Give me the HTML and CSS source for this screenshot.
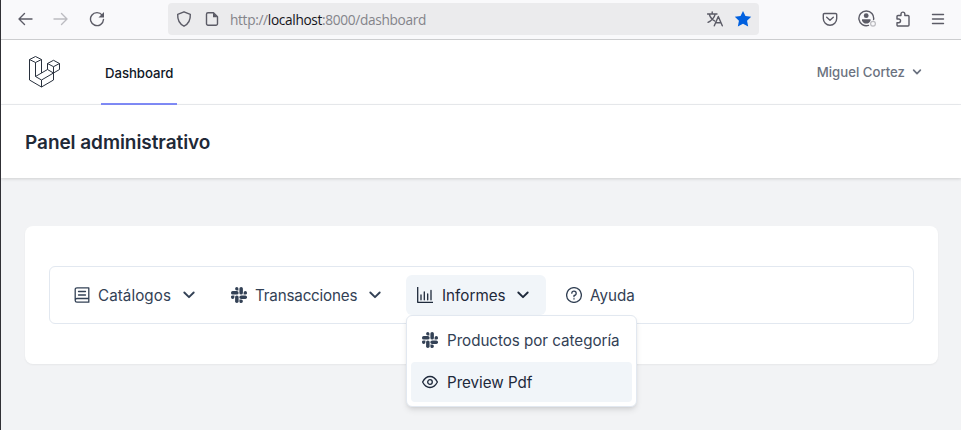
FILE: index.html
```html
<!DOCTYPE html>
<html lang="es">
<head>
<meta charset="utf-8">
<title>Panel administrativo</title>
<link rel="stylesheet" href="styles.css">
</head>
<body>
<svg class="defs" width="0" height="0">
  <symbol id="slack" viewBox="0 0 16 16"><g fill="currentColor">
    <path d="M5.800 0a1.600 1.600 0 0 1 1.600 1.600v1.800H5.800A1.700 1.700 0 0 1 5.800 0z"/><rect x="0" y="4.100" width="7.600" height="3.500" rx="1.700"/>
    <path d="M16 5.800a1.600 1.600 0 0 1-1.600 1.800h-1.800V5.800a1.700 1.700 0 0 1 3.400 0z"/><rect x="8.400" y="0" width="3.500" height="7.600" rx="1.700"/>
    <path d="M10.200 16a1.600 1.600 0 0 1-1.800-1.600v-1.800h1.800a1.700 1.700 0 0 1 0 3.400z"/><rect x="8.400" y="8.400" width="7.600" height="3.500" rx="1.700"/>
    <path d="M0 10.200a1.600 1.600 0 0 1 1.600-1.800h1.800v1.800a1.700 1.700 0 0 1-3.400 0z"/><rect x="4.100" y="8.400" width="3.500" height="7.600" rx="1.700"/></g></symbol>
  <symbol id="down" viewBox="0 0 14 14"><path d="M2.300 4.500 7 9.200 11.700 4.500" fill="none" stroke="currentColor" stroke-linecap="round" stroke-linejoin="round"/></symbol>
</svg>
<div class="window">
  <div class="toolbar">
    <svg class="tool back" viewBox="0 0 16 16"><path d="M15 8H2M7.500 2.500 2 8l5.500 5.500"/></svg>
    <svg class="tool forward" viewBox="0 0 16 16"><path d="M1 8h13M8.500 2.500 14 8l-5.500 5.500"/></svg>
    <svg class="tool reload" viewBox="0 0 16 16"><path d="M13.200 4.200A6.500 6.500 0 1 0 14.500 8.500"/><path class="solid" d="M15 1v5.500H9.500z"/></svg>
    <div class="address">
      <svg class="tool shield" viewBox="0 0 16 16"><path d="M8 .8 14.300 3.300C14.600 8.500 12.800 12.800 8 15.200 3.200 12.800 1.400 8.500 1.700 3.300z"/></svg>
      <svg class="tool page" viewBox="0 0 16 16"><path d="M9.500 1.700H4A1.500 1.500 0 0 0 2.500 3.200v9.600A1.500 1.500 0 0 0 4 14.300h8a1.500 1.500 0 0 0 1.500-1.500V5.700z"/><path class="solid" d="M9 1.500V6.200h4.700z"/></svg>
      <span class="url">http://<b>localhost</b>:8000/dashboard</span>
      <svg class="tool translate" viewBox="0 0 16 16"><path d="M.5 3h9.500M5.200 1v2M2.200 3c1 3.500 3.300 5.800 5.500 7M8.200 3C7.500 6.500 4 10 1 11.300M7.300 14.800 11.300 5.500l4 9.300M8.700 11.700h5.300"/></svg>
      <svg class="star" viewBox="0 0 16 16"><path d="M8 .8 10.200 5.400 15.300 6 11.600 9.600 12.600 14.700 8 12.200 3.400 14.700 4.400 9.600 .7 6 5.800 5.400z"/></svg>
    </div>
    <svg class="tool pocket" viewBox="0 0 16 16"><path d="M2.500 2.500h11a1.200 1.200 0 0 1 1.200 1.200V7.500a6.700 6.700 0 0 1-13.400 0V3.700A1.200 1.200 0 0 1 2.500 2.500zM4.700 6.300 8 9.300l3.300-3"/></svg>
    <svg class="tool account" viewBox="0 0 18 17"><path d="M10.500 15.400A7.400 7.400 0 1 1 15.600 9.500"/><circle class="solid" cx="8.200" cy="5.700" r="2.400"/><path class="solid" d="M4 9.300h8.500v1.400C11.500 12.700 10 13.500 8.200 13.500S5 12.700 4 10.700z"/><circle class="status" cx="15" cy="13.800" r="2.400"/></svg>
    <svg class="tool extension" viewBox="0 0 16 16"><path d="M2 8V5.500a1 1 0 0 1 1-1h3V3a1.900 1.900 0 0 1 3.800 0v1.500h3.200a1 1 0 0 1 1 1V14a1 1 0 0 1-1 1H3a1 1 0 0 1-1-1v-2.300h1.700a1.850 1.850 0 0 0 0-3.700z"/></svg>
    <svg class="tool burger" viewBox="0 0 16 16"><path d="M2.500 3.500h11M2.500 8h11M2.500 12.500h11"/></svg>
  </div>
  <nav class="nav">
    <svg class="logo" viewBox="28 55 34 34"><path d="M29.500 59.500 35.500 56.500 41.500 59.500 35.500 62.500zM29.500 59.500V80l12 7 12-7V73M35.500 62.500v14l6 3.500 12-7M41.500 59.500V73M41.500 80v7M35.500 76.500 47.500 69.500M47.500 63.500 53.500 60.300 59.500 63.500 53.500 66.700zM47.500 63.500v6L53.500 73l6-3.500v-6M53.500 66.700V73"/></svg>
    <a class="tab"><span>Dashboard</span></a>
    <div class="user"><span>Miguel Cortez</span><svg class="caret"><use href="#down"/></svg></div>
  </nav>
  <header class="heading"><h1>Panel administrativo</h1></header>
  <main>
    <section class="card">
      <div class="menubar">
        <div class="item catalogs"><svg class="icon" viewBox="0 0 16 16"><path d="M14.800 11.500V.8H3A1.800 1.800 0 0 0 1.200 2.600v10.800A1.800 1.800 0 0 0 3 15.200h11.800v-3.700H3a1.800 1.800 0 0 0-1.800 1.800M4.500 4.500h7M4.500 8h7"/></svg><span>Catálogos</span><svg class="chevron"><use href="#down"/></svg></div>
        <div class="item transactions"><svg class="icon slack"><use href="#slack"/></svg><span>Transacciones</span><svg class="chevron"><use href="#down"/></svg></div>
        <div class="item reports active"><svg class="icon" viewBox="0 0 16 16"><path d="M.7 0v15.300H16M4 8v4.800M7.300 5v7.800M10.700 7v5.800M14 3.500v9.300"/></svg><span>Informes</span><svg class="chevron"><use href="#down"/></svg>
          <div class="submenu">
            <div class="option"><svg class="icon slack"><use href="#slack"/></svg><span>Productos por categoría</span></div>
            <div class="option focused"><svg class="icon" viewBox="0 0 16 16"><path d="M.6 8C2.500 4.300 5 2.500 8 2.500S13.500 4.300 15.400 8C13.500 11.700 11 13.500 8 13.500S2.500 11.700.6 8z"/><circle cx="8" cy="8" r="2.300"/></svg><span>Preview Pdf</span></div>
          </div>
        </div>
        <div class="item help"><svg class="icon" viewBox="0 0 16 16"><circle cx="8" cy="8" r="7.400"/><path d="M5.800 6.200A2.200 2.200 0 1 1 8 8.500v1.200M8 11.700v.4"/></svg><span>Ayuda</span></div>
      </div>
    </section>
  </main>
</div>
</body>
</html>
```
FILE: styles.css
```css
* { box-sizing: border-box; }
body { margin: 0; font-family: Inter, "Liberation Sans", sans-serif; color: #334155; }
svg { display: block; flex: none; }
.defs { display: none; }
.window { height: 430px; overflow: hidden; border-left: 1px solid #303035; background: #f2f3f5; }

.toolbar { height: 40px; display: flex; align-items: center; padding: 0 15px 2px 16px; background: #f9f9fb; border-bottom: 1px solid #cccdcf; }
.tool { width: 16px; height: 16px; fill: none; stroke: #5b5b66; stroke-width: 1.4; stroke-linecap: round; stroke-linejoin: round; }
.tool .solid { fill: #5b5b66; stroke: none; }
.forward { margin-left: 20px; stroke: #bcbcc1; }
.reload { margin-left: 20px; }
.address { width: 591px; height: 32px; margin-left: 63px; padding: 0 8px; display: flex; align-items: center; background: #ebebed; border-radius: 4px; }
.page { margin-left: 12px; }
.url { flex: 1; margin-left: 10px; padding-top: 1px; font: 13.700px "Open Sans", sans-serif; letter-spacing: -0.34px; color: #84848a; }
.url b { font-weight: 400; color: #15141a; }
.star { width: 18px; height: 18px; margin-left: 11px; margin-right: -1px; fill: #0060df; }
.pocket { margin-left: 63px; }
.account { width: 18px; height: 17px; margin-left: 20px; }
.account .status { stroke: #bcbcc1; stroke-width: 1.2; }
.extension { margin-left: 19px; }
.burger { margin-left: auto; }

.nav { height: 65px; display: flex; align-items: stretch; padding: 0 39px 0 27px; background: #fff; border-bottom: 1px solid #ebedf0; }
.logo { width: 34px; height: 34px; margin-top: 15px; fill: none; stroke: #28303d; stroke-width: 1; stroke-linejoin: round; }
.tab { height: 65px; width: 76px; margin-left: 39px; padding: 2px 4px 0; display: flex; align-items: center; border-bottom: 2px solid #818cf8; font-size: 13.200px; font-weight: 460; letter-spacing: -.05px; color: #111827; white-space: nowrap; }
.user { margin-left: auto; display: flex; align-items: center; font-size: 13.200px; font-weight: 480; color: #6b7280; }
.caret { width: 10px; height: 10px; margin-left: 7px; stroke-width: 2.4; }

.heading { position: relative; height: 73px; display: flex; align-items: center; padding: 2px 24px 0; background: #fff; box-shadow: 0 1px 3px rgb(0 0 0 / .15); }
h1 { margin: 0; font-size: 19px; line-height: 24px; font-weight: 570; color: #1f2937; letter-spacing: -.06px; white-space: nowrap; }
main { padding: 48px 23px 0 24px; }
.card { height: 138px; padding: 40px 24px; background: #fff; border-radius: 8px; box-shadow: 0 1px 2px rgb(0 0 0 / .05); }
.menubar { height: 58px; padding: 8px 12px; display: flex; gap: 8px; border: 1px solid #e2e8f0; border-radius: 6px; }
.item { position: relative; height: 40px; display: flex; align-items: center; padding: 0 11px 0 12px; border-radius: 6px; font-size: 15.200px; font-weight: 380; letter-spacing: .02px; white-space: nowrap; }
.icon { width: 16px; height: 16px; margin-right: 8px; fill: none; stroke: currentColor; stroke-width: 1.3; stroke-linecap: round; stroke-linejoin: round; }
.icon.slack { stroke: none; }
.chevron { width: 14px; height: 14px; margin-left: auto; margin-right: 5px; stroke-width: 1.9; }
.catalogs { width: 150px; letter-spacing: .06px; }
.transactions { width: 178px; padding-left: 11px; letter-spacing: -.18px; }
.reports { width: 140px; padding-left: 11px; }
.reports > span { margin-left: 1px; }
.help { width: 93px; }
.active { background: #f1f5f9; color: #1e293b; }
.submenu { position: absolute; z-index: 1; top: 40px; left: 0; width: 231px; height: 92px; padding: 4px; display: grid; gap: 2px; grid-template: 40px 40px / minmax(0, 1fr); background: #fff; border: 1px solid #e2e8f0; border-radius: 6px; box-shadow: 0 4px 6px -1px rgb(0 0 0 / .1), 0 2px 4px -2px rgb(0 0 0 / .1); color: #334155; letter-spacing: -.04px; }
.option { display: flex; align-items: center; padding: 0 11px; border-radius: 4px; }
.option span { margin-left: 1px; }
.focused { background: #f1f5f9; color: #1e293b; }
```
